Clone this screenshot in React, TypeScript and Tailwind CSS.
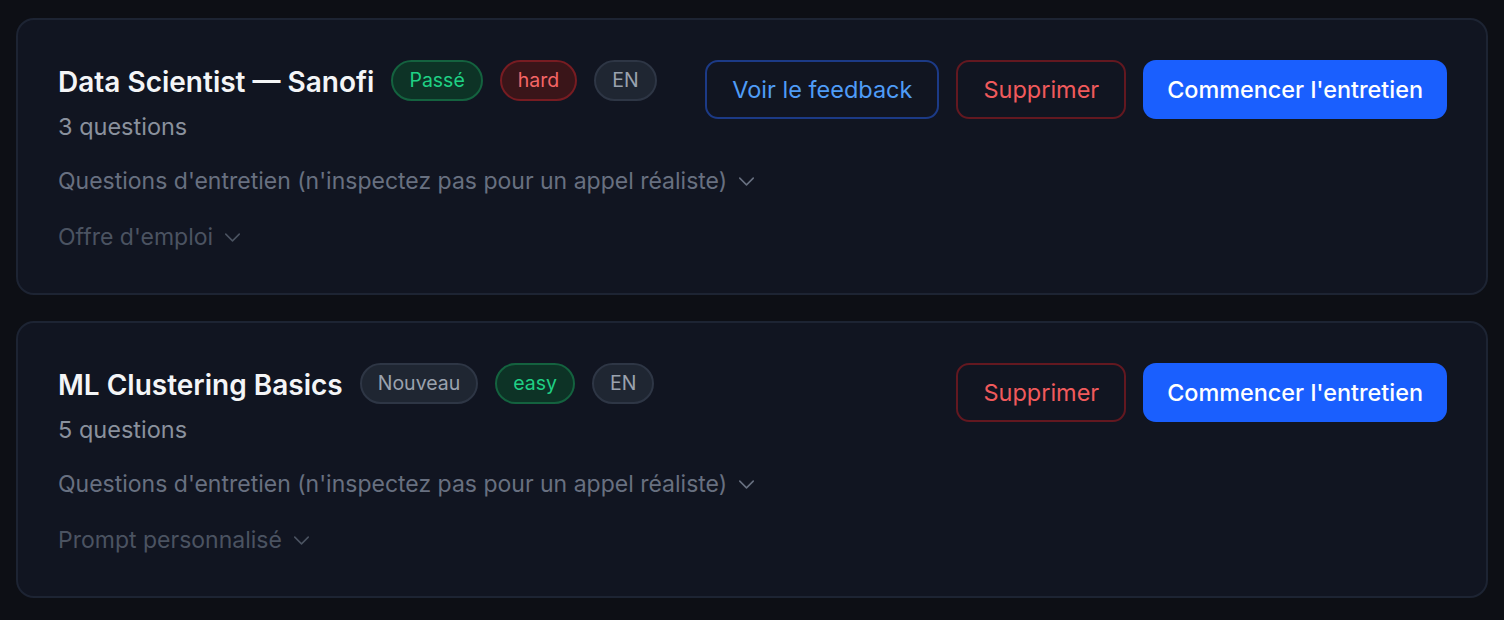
import { ChevronDown } from 'lucide-react';

type Badge = { label: string; tone: 'green' | 'red' | 'gray' };

interface Interview {
  title: string;
  count: number;
  badges: Badge[];
  hasFeedback: boolean;
  extra: string;
}

const interviews: Interview[] = [
  {
    title: 'Data Scientist — Sanofi',
    count: 3,
    badges: [
      { label: 'Passé', tone: 'green' },
      { label: 'hard', tone: 'red' },
      { label: 'EN', tone: 'gray' },
    ],
    hasFeedback: true,
    extra: "Offre d'emploi",
  },
  {
    title: 'ML Clustering Basics',
    count: 5,
    badges: [
      { label: 'Nouveau', tone: 'gray' },
      { label: 'easy', tone: 'green' },
      { label: 'EN', tone: 'gray' },
    ],
    hasFeedback: false,
    extra: 'Prompt personnalisé',
  },
];

const toneClasses = {
  green: 'bg-[#0d3326] border-[#14623f] text-[#1fd084]',
  red: 'bg-[#3a1519] border-[#771c22] text-[#f46566]',
  gray: 'bg-[#1f2632] border-[#2e3645] text-[#9aa2ae]',
};

function StatusBadge({ badge }: { badge: Badge }) {
  return (
    <span
      className={`h-[41px] px-[16px] flex items-center rounded-full border-2 text-[19.5px] ${toneClasses[badge.tone]}`}
    >
      {badge.label}
    </span>
  );
}

function Toggle({ label, muted }: { label: string; muted?: boolean }) {
  return (
    <button
      className={`flex items-center gap-[6px] h-[35px] text-[23px] ${muted ? 'text-[#4b5361]' : 'text-[#687080]'}`}
    >
      <span>{label}</span>
      <ChevronDown size={27} strokeWidth={1.4} />
    </button>
  );
}

function InterviewCard({ item }: { item: Interview }) {
  return (
    <section className="bg-[#111521] border-2 border-[#1d2433] rounded-[18px] pl-[40px] pr-[39px] pt-[40px] pb-[38px]">
      <div className="flex justify-between items-start">
        <div className="flex flex-col">
          <div className="flex items-center gap-[17px] h-[41px]">
            <h2 className="mt-[3px] leading-[36px] text-[28px] font-semibold text-[#f4f5f7]">{item.title}</h2>
            {item.badges.map((b) => (
              <StatusBadge key={b.label} badge={b} />
            ))}
          </div>
          <p className="mt-[8px] h-[35px] flex items-center text-[23.5px] text-[#8a919d]">
            {item.count} questions
          </p>
        </div>
        <div className="flex items-center gap-[17px]">
          {item.hasFeedback && (
            <button className="h-[59px] px-[25px] rounded-[13px] border-2 border-[#1c3a86] text-[#4f9cf7] text-[23.5px]">
              Voir le feedback
            </button>
          )}
          <button className="h-[59px] px-[25px] rounded-[13px] border-2 border-[#631820] text-[#f05a5c] text-[23.5px]">
            Supprimer
          </button>
          <button className="h-[59px] px-[24px] rounded-[13px] bg-[#1a5ffe] text-white text-[23.4px] font-medium">
            Commencer l'entretien
          </button>
        </div>
      </div>
      <div className="mt-[20px] flex flex-col gap-[21px] items-start">
        <Toggle label="Questions d'entretien (n'inspectez pas pour un appel réaliste)" />
        <Toggle label={item.extra} muted />
      </div>
    </section>
  );
}

export default function App() {
  return (
    <div
      className="min-h-[620px] bg-[#0d0f15] pt-[18px] px-[16px] flex flex-col gap-[26px]"
      style={{ fontFamily: 'Inter, "Noto Sans", sans-serif' }}
    >
      {interviews.map((item) => (
        <InterviewCard key={item.title} item={item} />
      ))}
    </div>
  );
}
